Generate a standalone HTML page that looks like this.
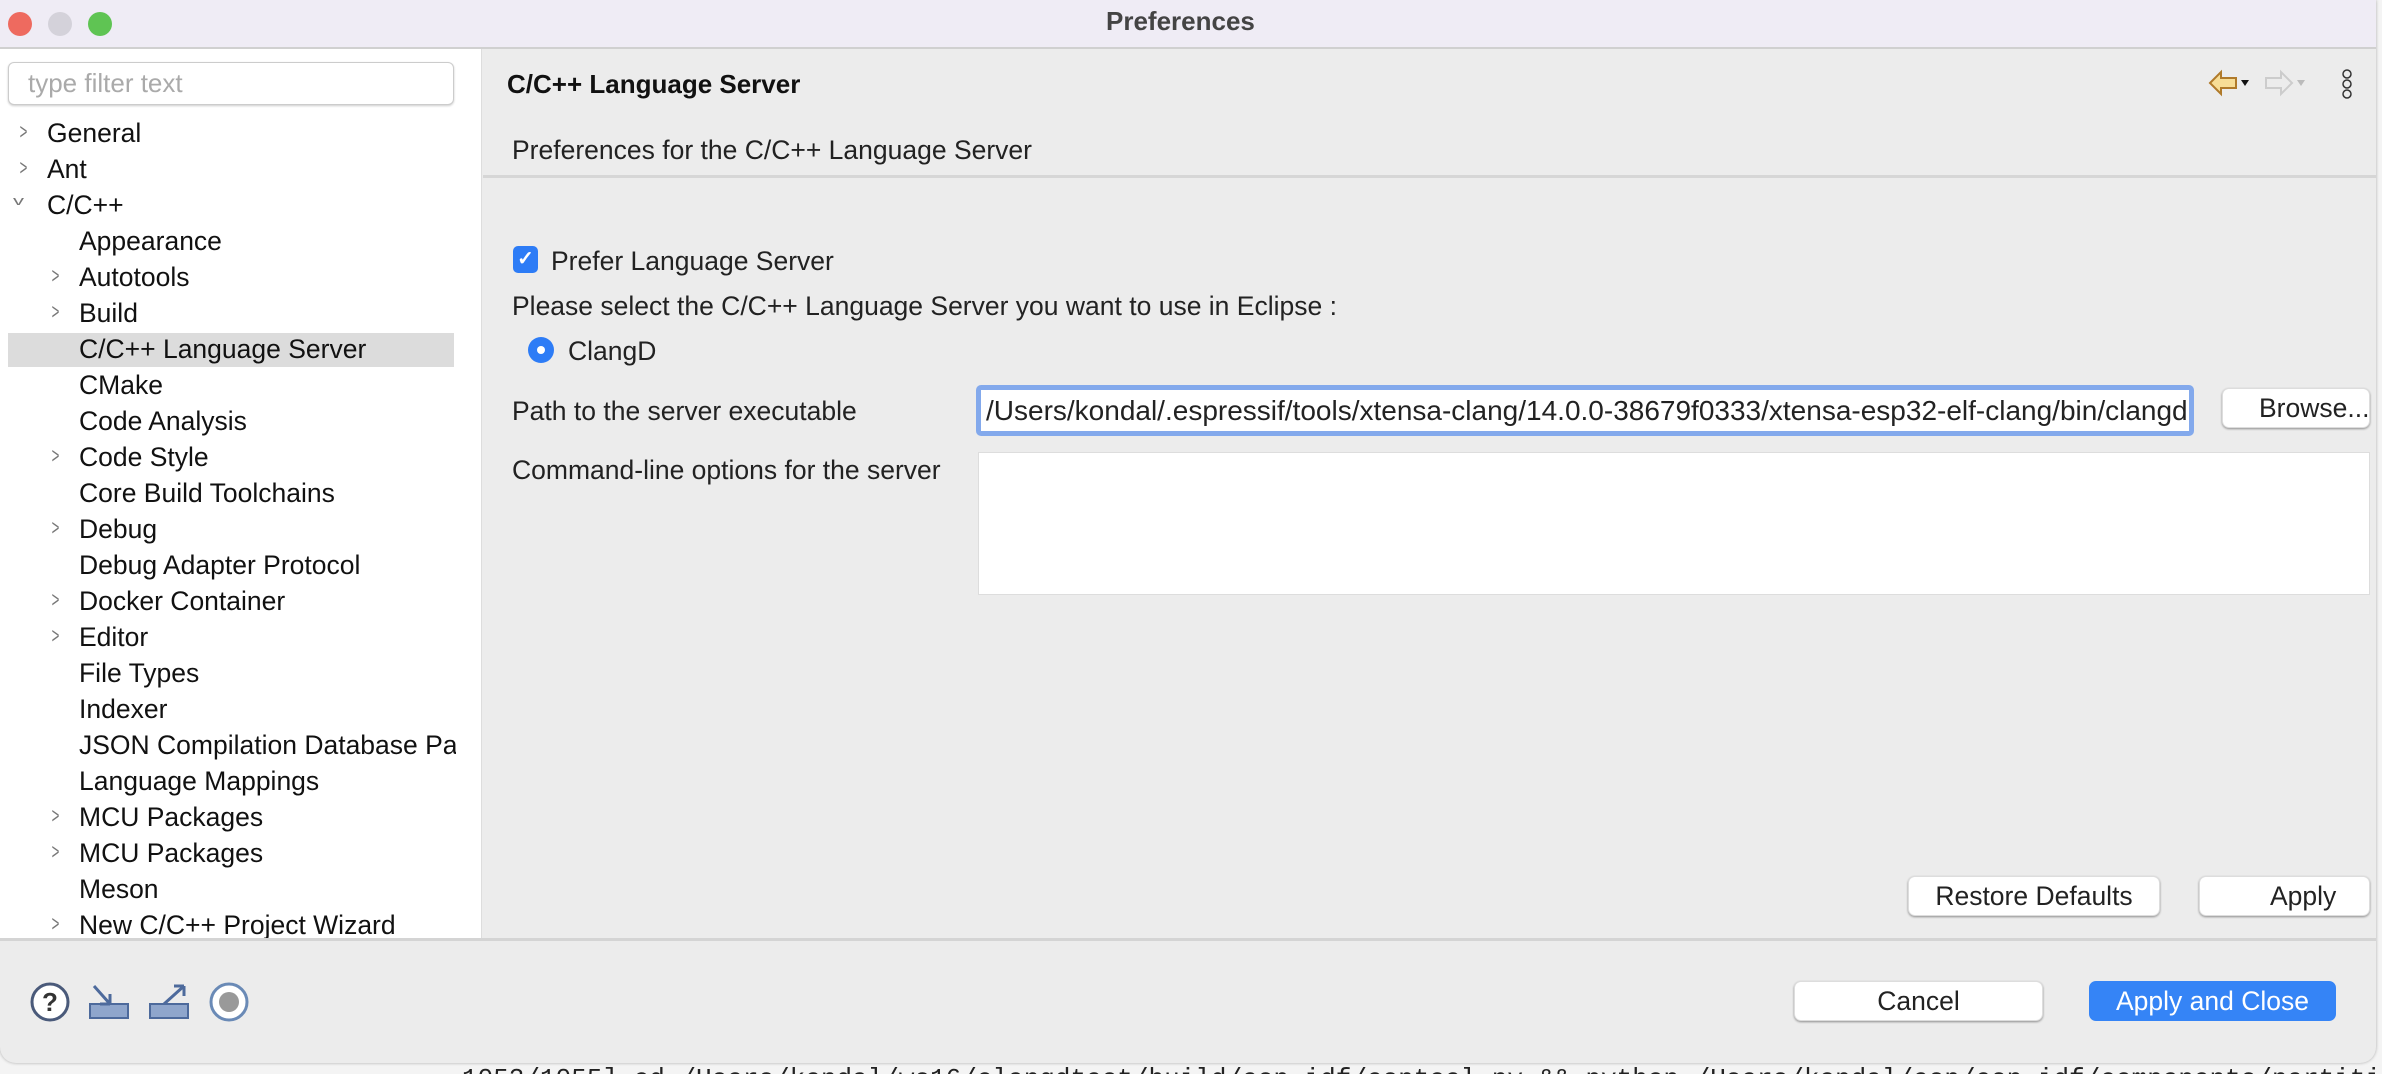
<!DOCTYPE html>
<html><head><meta charset="utf-8"><style>
*{box-sizing:border-box;margin:0;padding:0}
body{width:2382px;height:1074px;overflow:hidden;background:#f4f4f4;font-family:"Liberation Sans",sans-serif;color:#222;position:relative}
.a{position:absolute;white-space:nowrap}
#win{position:absolute;left:0;top:0;width:2376px;height:1063px;background:#ececec;border-radius:0 0 16px 16px;overflow:hidden;box-shadow:0 0 3px rgba(0,0,0,.3)}
#title{position:absolute;left:0;top:0;width:100%;height:49px;background:#efecf5;border-bottom:2px solid #d0d0d0}
.dot{position:absolute;top:12px;width:24px;height:24px;border-radius:50%}
#side{position:absolute;left:0;top:49px;width:482px;height:890px;background:#fff;border-right:1px solid #ddd}
.t{font-size:26.5px;color:#111}
.chev{position:absolute;font-size:22px;color:#777}
.btn{position:absolute;background:#fff;border-radius:7px;box-shadow:0 1px 2px rgba(0,0,0,.4);border:1px solid #ddd;font-size:26.5px;text-align:center}
.lbl{font-size:26.5px;color:#222}
</style></head><body>
<div class="a" style="left:0;top:1060px;width:2382px;height:14px;overflow:hidden">
<div class="a" style="left:462px;top:4px;font-family:'Liberation Mono',monospace;font-size:26px;color:#222;line-height:30px">1053/1055] cd /Users/kondal/ws16/clangdtest/build/esp-idf/esptool_py &amp;&amp; python /Users/kondal/esp/esp-idf/components/partition_table/</div>
</div>
<div id="win">
<div id="title">
<div class="dot" style="left:8px;background:#ee6a5f"></div>
<div class="dot" style="left:48px;background:#d4d2da"></div>
<div class="dot" style="left:88px;background:#5fc453"></div>
<div class="a" style="left:1106px;top:6px;font-size:26px;font-weight:bold;color:#444">Preferences</div>
</div>
<div id="side">
<div class="a" style="left:8px;top:13px;width:446px;height:43px;border:1px solid #ccc;border-radius:6px;background:#fff;box-shadow:0 1px 2px rgba(0,0,0,.2)"></div>
<div class="a" style="left:28px;top:19px;font-size:26px;color:#aaa">type filter text</div>
<div class="a" style="left:8px;top:284px;width:446px;height:34px;background:#dcdcdc"></div>
</div>
<div class="a" style="left:483px;top:175px;width:1893px;height:3px;background:#d6d6d6"></div>
<div class="a" style="left:507px;top:69px;font-size:26px;font-weight:bold;color:#111">C/C++ Language Server</div>
<svg class="a" style="left:2208px;top:68px" width="120" height="30" viewBox="0 0 120 30">
<path d="M2 15 L13 4 L13 10 L28 10 L28 20 L13 20 L13 26 Z" fill="#f7dd96" stroke="#b07a2a" stroke-width="2"/>
<path d="M33 12 L41 12 L37 18 Z" fill="#111"/>
<path d="M84 15 L73 4 L73 10 L58 10 L58 20 L73 20 L73 26 Z" fill="none" stroke="#ccc" stroke-width="2"/>
<path d="M89 12 L97 12 L93 18 Z" fill="#bbb"/>
</svg>
<svg class="a" style="left:2340px;top:68px" width="14" height="32"><circle cx="7" cy="6" r="4" fill="none" stroke="#333" stroke-width="1.5"/><circle cx="7" cy="16" r="4" fill="none" stroke="#333" stroke-width="1.5"/><circle cx="7" cy="26" r="4" fill="none" stroke="#333" stroke-width="1.5"/></svg>
<div class="a lbl" style="left:512px;top:135px">Preferences for the C/C++ Language Server</div>
<div class="a" style="left:513px;top:246px;width:25px;height:27px;border-radius:5px;background:#2d7cf6;color:#fff;font-size:20px;text-align:center;line-height:27px;font-weight:bold">✓</div>
<div class="a lbl" style="left:551px;top:246px">Prefer Language Server</div>
<div class="a lbl" style="left:512px;top:291px">Please select the C/C++ Language Server you want to use in Eclipse :</div>
<div class="a" style="left:528px;top:337px;width:26px;height:26px;border-radius:50%;background:#2d7cf6"></div>
<div class="a" style="left:537px;top:346px;width:8px;height:8px;border-radius:50%;background:#fff"></div>
<div class="a lbl" style="left:568px;top:336px">ClangD</div>
<div class="a lbl" style="left:512px;top:396px">Path to the server executable</div>
<div class="a" style="left:976px;top:385px;width:1218px;height:51px;border:5px solid #83a9ec;border-radius:5px;background:#fff"></div>
<div class="a" style="left:986px;top:395px;font-size:28px;color:#222">/Users/kondal/.espressif/tools/xtensa-clang/14.0.0-38679f0333/xtensa-esp32-elf-clang/bin/clangd</div>
<div class="btn" style="left:2222px;top:388px;width:148px;height:40px;line-height:38px;text-align:left;padding-left:36px">Browse...</div>
<div class="a lbl" style="left:512px;top:455px">Command-line options for the server</div>
<div class="a" style="left:978px;top:452px;width:1392px;height:143px;background:#fff;border:1px solid #ddd"></div>
<div class="btn" style="left:1908px;top:876px;width:252px;height:40px;line-height:38px">Restore Defaults</div>
<div class="btn" style="left:2199px;top:876px;width:171px;height:40px;line-height:38px;text-align:left;padding-left:70px">Apply</div>
<div class="a" style="left:0;top:938px;width:2376px;height:3px;background:#d4d4d4"></div>
<svg class="a" style="left:28px;top:980px" width="230" height="44" viewBox="0 0 230 44">
<circle cx="22" cy="22" r="18" fill="#fff" stroke="#4a5a7a" stroke-width="3"/>
<text x="22" y="31" font-size="26" font-weight="bold" text-anchor="middle" fill="#333" font-family="Liberation Sans">?</text>
<rect x="62" y="24" width="38" height="14" fill="#8fa6cc" stroke="#4d6a9c" stroke-width="2"/>
<path d="M66 6 L82 24 M82 24 L82 14 M82 24 L72 24" stroke="#4d6a9c" stroke-width="3" fill="none"/>
<rect x="122" y="24" width="38" height="14" fill="#8fa6cc" stroke="#4d6a9c" stroke-width="2"/>
<path d="M136 24 L156 6 M156 6 L146 6 M156 6 L156 16" stroke="#4d6a9c" stroke-width="3" fill="none"/>
<circle cx="201" cy="22" r="18" fill="#fff" stroke="#6a8ab6" stroke-width="3"/>
<circle cx="201" cy="22" r="10" fill="#999"/>
</svg>
<div class="btn" style="left:1794px;top:981px;width:249px;height:40px;line-height:38px">Cancel</div>
<div class="btn" style="left:2089px;top:981px;width:247px;height:40px;line-height:38px;background:#3584f6;color:#fff;box-shadow:none;border-color:#3584f6">Apply and Close</div>
</div>
<script>
var items=[[0,1,"General"],[0,1,"Ant"],[0,2,"C/C++"],[1,0,"Appearance"],[1,1,"Autotools"],[1,1,"Build"],[1,0,"C/C++ Language Server"],[1,0,"CMake"],[1,0,"Code Analysis"],[1,1,"Code Style"],[1,0,"Core Build Toolchains"],[1,1,"Debug"],[1,0,"Debug Adapter Protocol"],[1,1,"Docker Container"],[1,1,"Editor"],[1,0,"File Types"],[1,0,"Indexer"],[1,0,"JSON Compilation Database Pa"],[1,0,"Language Mappings"],[1,1,"MCU Packages"],[1,1,"MCU Packages"],[1,0,"Meson"],[1,1,"New C/C++ Project Wizard"]];
var h="";items.forEach(function(it,i){var y=118+i*36;var x=it[0]?79:47;
if(it[1]==1)h+='<div class="a chev" style="left:'+(x-30)+'px;top:'+(y+1)+'px;transform:scaleX(.6)">&gt;</div>';
if(it[1]==2)h+='<div class="a chev" style="left:'+(x-34)+'px;top:'+(y-2)+'px;transform:scaleY(.6)">v</div>';
h+='<div class="a t" style="left:'+x+'px;top:'+y+'px">'+it[2]+'</div>';});
var d=document.createElement('div');d.style.cssText='position:absolute;left:0;top:0;width:456px;height:938px;overflow:hidden';d.innerHTML=h;document.getElementById('win').appendChild(d);
</script>
</body></html>
